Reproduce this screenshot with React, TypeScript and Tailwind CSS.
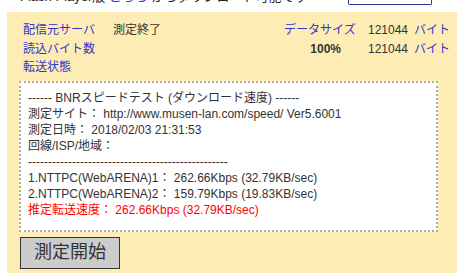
export default function App() {
  const font = { fontFamily: '"Liberation Sans", "Noto Sans CJK JP", sans-serif' };
  return (
    <main className="w-[457px] h-[278px] bg-white overflow-hidden text-[12px] text-[#333]" style={font}>
      {/* page text cut off at the top */}
      <div className="h-[12px] overflow-hidden flex items-start">
        <p className="ml-[20px] w-[328px] shrink-0 -mt-[11px] text-[13px] leading-[16px] text-[#222] whitespace-nowrap">
          Flash Player版 <span className="text-[#3333cc]">こちら</span> からダウンロード可能です
        </p>
        <div className="w-[84px] h-[5px] shrink-0 border border-t-0 border-[#333399] rounded-b-[2px] bg-white" />
      </div>

      <section className="ml-[7px] bg-[#fdedb5] pt-[9px] pb-[4px]">
        <div className="pl-[16px] leading-[18.5px]">
          <div className="flex">
            <span className="w-[90px] text-[#3333cc]">配信元サーバ</span>
            <span className="w-[171px]">測定終了</span>
            <span className="w-[84px] text-[#3333cc]">データサイズ</span>
            <span className="w-[46px]">121044</span>
            <span className="text-[#3333cc]">バイト</span>
          </div>
          <div className="flex">
            <span className="w-[90px] text-[#3333cc]">読込バイト数</span>
            <span className="w-[171px]"></span>
            <span className="w-[84px] text-right pr-[27px] font-bold">100%</span>
            <span className="w-[46px]">121044</span>
            <span className="text-[#3333cc]">バイト</span>
          </div>
          <div className="flex">
            <span className="text-[#3333cc]">転送状態</span>
          </div>
        </div>

        <div className="ml-[12px] mt-[4px] w-[419px] h-[151px] bg-white border-2 border-dotted border-[#aaa] pl-[7px] pt-[7px] leading-[16px] text-[#333] whitespace-pre">
          <div>------ BNRスピードテスト (ダウンロード速度) ------</div>
          <div>測定サイト： http://www.musen-lan.com/speed/ Ver5.6001</div>
          <div>測定日時： 2018/02/03 21:31:53</div>
          <div>回線/ISP/地域：</div>
          <div>--------------------------------------------------</div>
          <div>1.NTTPC(WebARENA)1： 262.66Kbps (32.79KB/sec)</div>
          <div>2.NTTPC(WebARENA)2： 159.79Kbps (19.83KB/sec)</div>
          <div className="text-[#ff0000]">推定転送速度： 262.66Kbps (32.79KB/sec)</div>
        </div>

        <button className="ml-[13px] mt-[5px] w-[100px] h-[32px] bg-[#cccccc] border border-[#333] text-[18px] text-[#333] flex items-center justify-center">
          測定開始
        </button>
      </section>
    </main>
  );
}
